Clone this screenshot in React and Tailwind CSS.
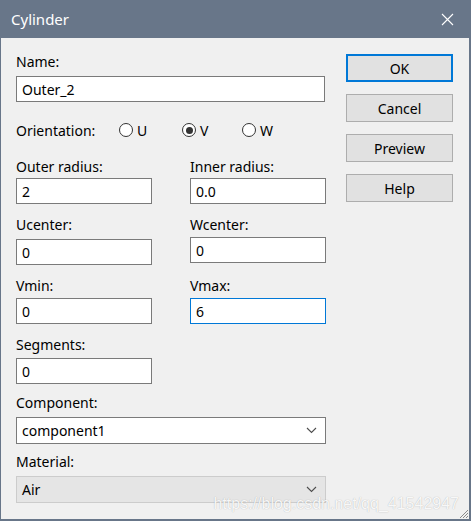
import React from 'react';

const font = { fontFamily: '"Noto Sans", "Open Sans", sans-serif' };

const TextBox = ({ value, className = '', focused = false }) => (
  <div
    className={`h-[26px] bg-white flex items-center px-[5px] text-[14px] text-black border ${
      focused ? 'border-[#0078d7]' : 'border-[#7a7a7a]'
    } ${className}`}
  >
    {value}
  </div>
);

const Label = ({ children, className = '' }) => (
  <div className={`h-[20px] leading-[20px] text-[14px] text-black ${className}`}>{children}</div>
);

const Chevron = () => (
  <svg width="11" height="7" viewBox="0 0 11 7" className="shrink-0">
    <path d="M1 1 L5.5 5.5 L10 1" fill="none" stroke="#4d4d4d" strokeWidth="1.1" />
  </svg>
);

const Combo = ({ value, disabled = false }) => (
  <div
    className={`h-[27px] w-[310px] flex items-center justify-between pl-[5px] pr-[8px] text-[14px] text-black border ${
      disabled ? 'bg-[#e5e5e5] border-[#cccccc]' : 'bg-white border-[#7a7a7a]'
    }`}
  >
    <span>{value}</span>
    <Chevron />
  </div>
);

const Radio = ({ label, checked }) => (
  <div className="flex items-center gap-[4px]">
    <span className="w-[14px] h-[14px] rounded-full border border-[#333] bg-white flex items-center justify-center">
      {checked && <span className="w-[7px] h-[7px] rounded-full bg-[#333]" />}
    </span>
    <span className="text-[14px] text-black">{label}</span>
  </div>
);

const Button = ({ children, primary = false }) => (
  <div
    className={`h-[28px] w-[107px] flex items-center justify-center bg-[#e1e1e1] text-[14px] text-black ${
      primary ? 'border-2 border-[#0078d7]' : 'border border-[#adadad]'
    }`}
  >
    {children}
  </div>
);

const App = () => {
  return (
    <div style={font} className="w-[471px] h-[521px] bg-[#687689] flex flex-col pl-px pr-[2px] pb-[2px]">
      {/* title bar */}
      <div className="h-[38px] shrink-0 flex items-center justify-between pl-[10px] pr-[15px]">
        <span className="text-[15px] text-white">Cylinder</span>
        <svg width="13" height="13" viewBox="0 0 13 13">
          <path d="M1 1 L12 12 M12 1 L1 12" stroke="white" strokeWidth="1.1" />
        </svg>
      </div>

      {/* body */}
      <div className="flex-1 bg-[#f0f0f0] relative flex pl-[15px] pt-[14px]">
        <div className="w-[310px] flex flex-col">
          <Label>Name:</Label>
          <TextBox value="Outer_2" className="mt-[4px] w-[309px]" />

          <div className="mt-[18px] h-[20px] flex items-center">
            <span className="text-[14px] text-black w-[103px]">Orientation:</span>
            <div className="w-[63px]"><Radio label="U" /></div>
            <div className="w-[60px]"><Radio label="V" checked /></div>
            <Radio label="W" />
          </div>

          <div className="mt-[17px] grid grid-cols-[136px_136px] gap-x-[38px]">
            <div>
              <Label>Outer radius:</Label>
              <TextBox value="2" className="mt-px" />
            </div>
            <div>
              <Label>Inner radius:</Label>
              <TextBox value="0.0" className="mt-px" />
            </div>

            <div className="mt-[11px]">
              <Label>Ucenter:</Label>
              <TextBox value="0" className="mt-[4px]" />
            </div>
            <div className="mt-[11px]">
              <Label>Wcenter:</Label>
              <TextBox value="0" className="mt-[2px]" />
            </div>

            <div className="mt-[11px]">
              <Label>Vmin:</Label>
              <TextBox value="0" className="mt-[2px]" />
            </div>
            <div className="mt-[11px]">
              <Label>Vmax:</Label>
              <TextBox value="6" focused className="mt-[2px]" />
            </div>

            <div className="mt-[11px]">
              <Label>Segments:</Label>
              <TextBox value="0" className="mt-[3px]" />
            </div>
          </div>

          <Label className="mt-[9px]">Component:</Label>
          <div className="mt-[4px]">
            <Combo value="component1" />
          </div>

          <Label className="mt-[8px]">Material:</Label>
          <div className="mt-[4px]">
            <Combo value="Air" disabled />
          </div>
        </div>

        <div className="ml-[20px] pt-[2px] flex flex-col gap-[12px]">
          <Button primary>OK</Button>
          <Button>Cancel</Button>
          <Button>Preview</Button>
          <Button>Help</Button>
        </div>

        {/* watermark */}
        <div
          className="absolute right-[10px] bottom-[3px] text-[16px] text-white/90 pointer-events-none"
          style={{ fontFamily: '"Liberation Sans", Arial, sans-serif', textShadow: '0 0 1px rgba(0,0,0,0.3)' }}
        >
          https://blog.csdn.net/qq_41542947
        </div>

        {/* resize grip */}
        <svg width="10" height="10" viewBox="0 0 10 10" className="absolute right-0 bottom-0">
          <path d="M9 1 L1 9 M9 4 L4 9 M9 7 L7 9" stroke="#8a8a8a" strokeWidth="1" />
        </svg>
      </div>
    </div>
  );
};

export default App;
